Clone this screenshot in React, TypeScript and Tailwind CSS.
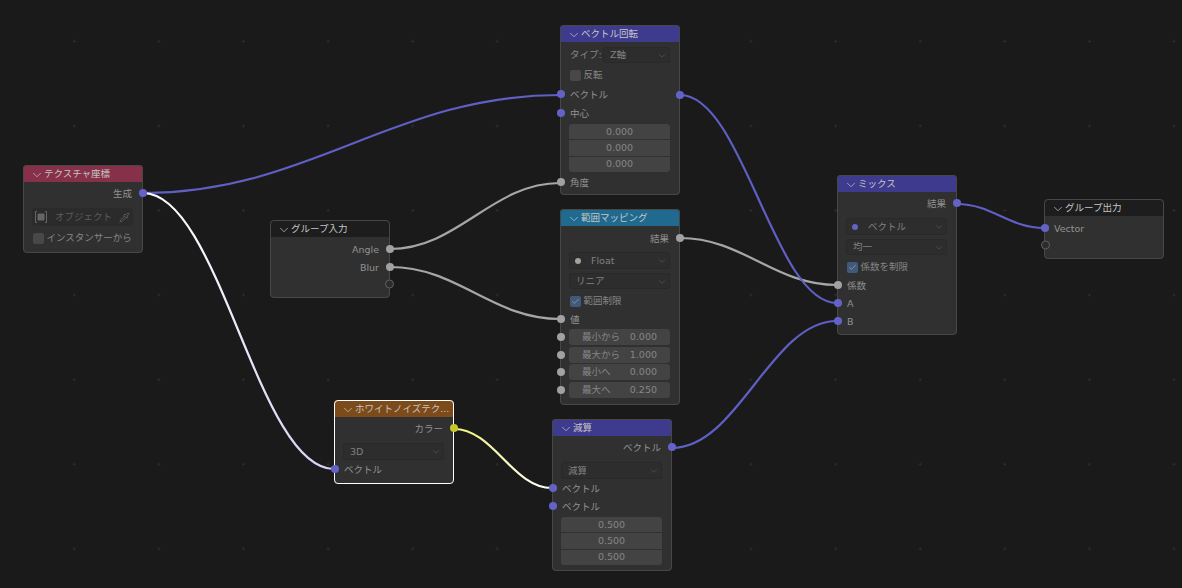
import * as React from "react";
import { ChevronDown, Pipette, Check } from "lucide-react";
import { clsx } from "clsx";

const PURPLE = "bg-[#6363c7]";
const GRAY = "bg-[#a1a1a1]";
const YELLOW = "bg-[#c7c729]";

function Socket({ side, color }: { side: "left" | "right"; color?: string }) {
  return (
    <span
      className={clsx(
        "absolute top-1/2 -translate-y-1/2 rounded-full",
        color ? "h-[8px] w-[8px]" : "h-[9px] w-[9px] border border-[#5f5f5f] bg-[#2c2c2c]",
        side === "left" ? "left-[-3.5px]" : "right-[-4px]",
        color,
      )}
    />
  );
}

function Row({
  label,
  className,
  left,
  right,
}: {
  label?: string;
  className?: string;
  left?: string;
  right?: string;
}) {
  return (
    <div
      className={clsx(
        "relative flex h-[18px] shrink-0 items-center pt-[2px] text-[9.5px] text-[#929292]",
        right ? "justify-end pr-[11px]" : "pl-[10px]",
        className,
      )}
    >
      {left ? <Socket side="left" color={left} /> : null}
      {label}
      {right ? <Socket side="right" color={right} /> : null}
    </div>
  );
}

function EmptySocket({ side, className }: { side: "left" | "right"; className?: string }) {
  return (
    <div className={clsx("relative h-[18px] shrink-0", className)}>
      <Socket side={side} />
    </div>
  );
}

function Select({
  label,
  dot,
  inline,
  className,
}: {
  label: string;
  dot?: string;
  inline?: boolean;
  className?: string;
}) {
  return (
    <div
      className={clsx(
        "flex shrink-0 items-center rounded-[3px] border border-[#292929] bg-[#2d2d2d] pr-[2px] pt-px text-[9.5px] text-[#808080]",
        inline ? "mr-[10px] flex-1" : "ml-[9px] mr-[10px]",
        className,
      )}
    >
      {dot ? <span className={clsx("ml-[5px] mr-[10px] h-[6px] w-[6px] rounded-full", dot)} /> : <span className="w-[6px]" />}
      <span className="flex-1">{label}</span>
      <ChevronDown size={10} strokeWidth={1.25} className="text-[#666666]" />
    </div>
  );
}

function CheckRow({ label, checked, className }: { label: string; checked?: boolean; className?: string }) {
  return (
    <div className={clsx("flex h-[18px] shrink-0 items-center gap-[3px] pl-[9.5px] text-[9.5px] text-[#868686]", className)}>
      <span
        className={clsx(
          "flex h-[11px] w-[11px] items-center justify-center rounded-[2px]",
          checked ? "bg-[#41597a]" : "bg-[#484848]",
        )}
      >
        {checked ? <Check size={9} strokeWidth={2} className="text-[#9aa2ae]" /> : null}
      </span>
      <span className="pt-px">{label}</span>
    </div>
  );
}

function Fields({ values, className }: { values: string[]; className?: string }) {
  return (
    <div className={clsx("ml-[9px] mr-[10px] flex shrink-0 flex-col gap-px overflow-hidden rounded-[3px]", className)}>
      {values.map((v, i) => (
        <div key={i} className="flex h-[15.4px] items-center justify-center bg-[#434343] text-[9.5px] text-[#868686]">
          {v}
        </div>
      ))}
    </div>
  );
}

function RangeField({ label, value, className }: { label: string; value: string; className?: string }) {
  return (
    <div
      className={clsx(
        "ml-[9px] mr-[10px] flex h-[16px] shrink-0 items-center justify-between rounded-[3px] bg-[#434343] pl-[13px] pr-[13px] text-[9.5px] text-[#868686]",
        className,
      )}
    >
      <span>{label}</span>
      <span>{value}</span>
    </div>
  );
}

function Node({
  title,
  x,
  y,
  h,
  head,
  selected,
  children,
}: {
  title: string;
  x: number;
  y: number;
  h: number;
  head: string;
  selected?: boolean;
  children: React.ReactNode;
}) {
  return (
    <div
      className={clsx(
        "absolute flex w-[120px] flex-col rounded-[4px] bg-[#303030] outline outline-1 -outline-offset-1",
        selected ? "outline-white" : "outline-[#474747]",
      )}
      style={{ left: x, top: y, height: h }}
    >
      <div className={clsx("flex h-[17px] shrink-0 items-center gap-[0.5px] rounded-t-[4px] pl-[6.5px] pt-[2px] text-[9.5px] text-[#c6c6c6]", head)}>
        <ChevronDown size={14} strokeWidth={1.25} />
        <span>{title}</span>
      </div>
      {children}
    </div>
  );
}

function link(x1: number, y1: number, x2: number, y2: number) {
  const d = Math.max(Math.abs(x2 - x1) * 0.4, 20);
  return `M${x1} ${y1} C${x1 + d} ${y1} ${x2 - d} ${y2} ${x2} ${y2}`;
}

function Links() {
  return (
    <svg className="absolute left-0 top-0" width={1182} height={588} fill="none" strokeLinecap="round">
      <defs>
        <linearGradient id="selPurple" gradientUnits="userSpaceOnUse" x1="143" y1="193" x2="334" y2="469">
          <stop offset="0" stopColor="#ffffff" />
          <stop offset="1" stopColor="#d6d2f5" />
        </linearGradient>
        <linearGradient id="selYellow" gradientUnits="userSpaceOnUse" x1="454" y1="429" x2="552" y2="488">
          <stop offset="0" stopColor="#f0f07a" />
          <stop offset="1" stopColor="#ffffff" />
        </linearGradient>
      </defs>
      <path d={link(143, 193, 560, 95)} stroke="#5f5fc4" strokeWidth={2.2} />
      <path d={link(143, 193, 334, 469)} stroke="url(#selPurple)" strokeWidth={2.2} />
      <path d={link(390, 249, 560, 183)} stroke="#a6a6a6" strokeWidth={2.2} />
      <path d={link(390, 267, 560, 319)} stroke="#a6a6a6" strokeWidth={2.2} />
      <path d={link(680, 238, 837, 285)} stroke="#a6a6a6" strokeWidth={2.2} />
      <path d={link(680, 95, 837, 303)} stroke="#5f5fc4" strokeWidth={2.2} />
      <path d={link(672, 448, 837, 321)} stroke="#5f5fc4" strokeWidth={2.2} />
      <path d={link(957, 204, 1044, 228)} stroke="#5f5fc4" strokeWidth={2.2} />
      <path d={link(454, 429, 552, 488)} stroke="url(#selYellow)" strokeWidth={2.2} />
    </svg>
  );
}

function ObjectIcon() {
  return (
    <svg width={14} height={14} viewBox="0 0 14 14" fill="none" className="ml-[2px] text-[#666666]">
      <rect x={3.5} y={3.5} width={7} height={7} rx={1} fill="currentColor" />
      <path d="M3 1.5H1.5V12.5H3M11 1.5H12.5V12.5H11" stroke="currentColor" strokeWidth={1} />
    </svg>
  );
}

export default function App() {
  return (
    <div
      className="relative h-[588px] w-[1182px] overflow-hidden bg-[#1a1a1a] bg-[radial-gradient(circle,#2c2c2c_1px,transparent_1.2px)] bg-[size:84.6px_84.6px] bg-[position:32px_-1px]"
      style={{ fontFamily: '"DejaVu Sans", "Noto Sans CJK JP", sans-serif' }}
    >
      <Links />

      <Node title="テクスチャ座標" x={23} y={165} h={88} head="bg-[#873049]">
        <Row label="生成" right={PURPLE} className="mt-[2px]" />
        <div className="ml-[9px] mr-[10px] mt-[6px] flex h-[18px] shrink-0 items-center rounded-[3px] bg-[#2b2b2b] pr-[3px] text-[9.5px] text-[#5c5c5c]">
          <ObjectIcon />
          <span className="ml-[7px] flex-1">オブジェクト</span>
          <Pipette size={11} strokeWidth={1.5} className="text-[#6e6e6e]" />
        </div>
        <CheckRow label="インスタンサーから" className="mt-[3px]" />
      </Node>

      <Node title="グループ入力" x={270} y={220} h={78} head="bg-[#1d1d1d]">
        <Row label="Angle" right={GRAY} className="mt-[3px]" />
        <Row label="Blur" right={GRAY} />
        <EmptySocket side="right" className="mt-[-1px]" />
      </Node>

      <Node title="ホワイトノイズテク..." x={334} y={400} h={84} head="bg-[#7d4a1a]" selected>
        <Row label="カラー" right={YELLOW} className="mt-[2px]" />
        <Select label="3D" className="mt-[6px] h-[17px]" />
        <Row label="ベクトル" left={PURPLE} />
      </Node>

      <Node title="ベクトル回転" x={560} y={25} h={170} head="bg-[#3e3a8e]">
        <div className="mt-[5px] flex h-[16px] shrink-0 items-center pl-[10px] text-[9.5px] text-[#868686]">
          <span className="w-[33px]">タイプ:</span>
          <Select label="Z軸" inline className="h-[16px]" />
        </div>
        <CheckRow label="反転" className="mt-[3px]" />
        <Row label="ベクトル" left={PURPLE} className="mt-[1px]" />
        <Row label="中心" left={PURPLE} className="mt-[1px]" />
        <Fields values={["0.000", "0.000", "0.000"]} className="mt-[2px]" />
        <Row label="角度" left={GRAY} className="mt-[1px]" />
        <span className="absolute right-[-4px] top-[66px] h-[8px] w-[8px] rounded-full bg-[#6363c7]" />
      </Node>

      <Node title="範囲マッピング" x={560} y={209} h={196} head="bg-[#1f6a8e]">
        <Row label="結果" right={GRAY} className="mt-[3px]" />
        <Select label="Float" dot={GRAY} className="mt-[5px] h-[17px]" />
        <Select label="リニア" className="mt-[4px] h-[16px]" />
        <CheckRow label="範囲制限" checked className="mt-[3px]" />
        <Row label="値" left={GRAY} />
        <div className="relative mt-[1px] shrink-0">
          <Socket side="left" color={GRAY} />
          <RangeField label="最小から" value="0.000" />
        </div>
        <div className="relative mt-[1.7px] shrink-0">
          <Socket side="left" color={GRAY} />
          <RangeField label="最大から" value="1.000" />
        </div>
        <div className="relative mt-[1.7px] shrink-0">
          <Socket side="left" color={GRAY} />
          <RangeField label="最小へ" value="0.000" />
        </div>
        <div className="relative mt-[1.7px] shrink-0">
          <Socket side="left" color={GRAY} />
          <RangeField label="最大へ" value="0.250" />
        </div>
      </Node>

      <Node title="減算" x={552} y={419} h={152} head="bg-[#3e3a8e]">
        <Row label="ベクトル" right={PURPLE} className="mt-[2px]" />
        <Select label="減算" className="mt-[6px] h-[17px]" />
        <Row label="ベクトル" left={PURPLE} />
        <Row label="ベクトル" left={PURPLE} />
        <Fields values={["0.500", "0.500", "0.500"]} className="mt-[2px]" />
      </Node>

      <Node title="ミックス" x={837} y={175} h={160} head="bg-[#3e3a8e]">
        <Row label="結果" right={PURPLE} className="mt-[2px]" />
        <Select label="ベクトル" dot={PURPLE} className="mt-[6px] h-[17px]" />
        <Select label="均一" className="mt-[4px] h-[16px]" />
        <CheckRow label="係数を制限" checked className="mt-[3px]" />
        <Row label="係数" left={GRAY} />
        <Row label="A" left={PURPLE} />
        <Row label="B" left={PURPLE} />
      </Node>

      <Node title="グループ出力" x={1044} y={199} h={60} head="bg-[#1d1d1d]">
        <Row label="Vector" left={PURPLE} className="mt-[3px]" />
        <EmptySocket side="left" className="mt-[-1px]" />
      </Node>
    </div>
  );
}
